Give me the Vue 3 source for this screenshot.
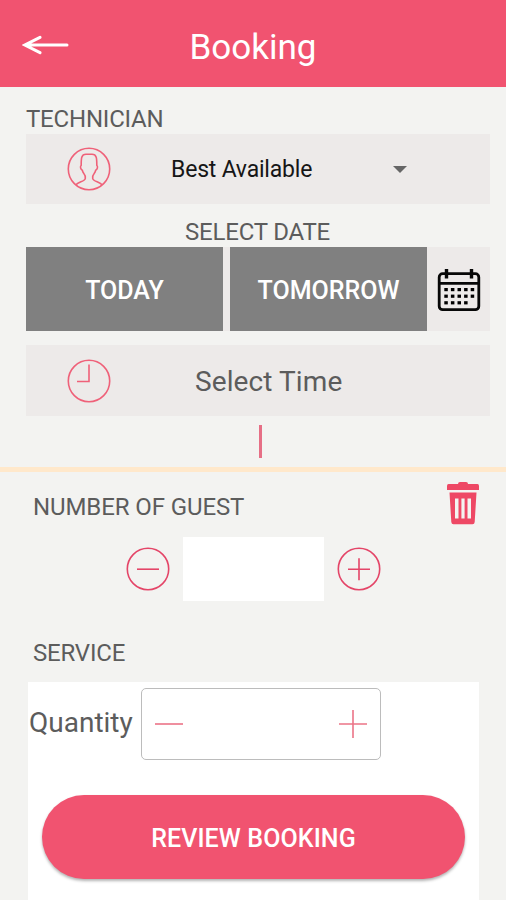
<template>
  <div class="booking">
    <header class="topbar">
      <button class="back-btn" aria-label="Back">
        <svg width="48" height="24" viewBox="0 0 48 24">
          <path d="M18 4.3 L3 12 L18 19.7 M4 12 H45" />
        </svg>
      </button>
      <h1 class="title">Booking</h1>
    </header>

    <section class="schedule">
      <div class="label technician-label"><span>TECHNICIAN</span></div>
      <div class="field">
        <svg class="field-icon" width="44" height="44" viewBox="0 0 44 44">
          <circle cx="22" cy="22" r="20.7" />
          <path
            d="M9 37.8 C11 34.8 18 34.5 18.3 31.5 C18.5 29.5 18 28 17 26.8 C16 25.5 15.6 24.5 15.3 23.3 C13.4 22.5 13 19.5 14.2 18.3 C14.2 12 14 7.3 19 7.3 H25 C30 7.3 29.8 12 29.8 18.3 C31 19.5 30.6 22.5 28.7 23.3 C28.4 24.5 28 25.5 27 26.8 C26 28 25.5 29.5 25.7 31.5 C26 34.5 33 34.8 35 37.8"
          />
        </svg>
        <span class="technician">Best Available</span>
        <span class="caret"></span>
      </div>

      <div class="label date-label"><span>SELECT DATE</span></div>
      <div class="dates">
        <button v-for="day in DAYS" :key="day" class="day-btn" @click="selectedDay = day">
          <span>{{ day }}</span>
        </button>
        <button class="calendar-btn" aria-label="Pick a date">
          <svg width="44" height="44" viewBox="0 0 44 44">
            <rect class="frame" x="2.2" y="5.7" width="39.6" height="36" rx="3.5" />
            <path class="frame" d="M2 15.3 H42" />
            <path class="ring" d="M9.5 1 V10.5 M34.5 1 V10.5" />
            <rect
              v-for="dot in calendarDots"
              :key="dot.id"
              :x="dot.x"
              :y="dot.y"
              width="3.5"
              height="3.2"
            />
          </svg>
        </button>
      </div>

      <div class="field time-field">
        <svg class="field-icon" width="44" height="44" viewBox="0 0 44 44">
          <circle cx="22" cy="22" r="20.7" />
          <path d="M22 5.5 V22.5 H10" />
        </svg>
        <span class="time">Select Time</span>
      </div>
      <div class="cursor"></div>
    </section>

    <section class="guests">
      <div class="guests-head">
        <span class="label guest-label">NUMBER OF GUEST</span>
        <button class="trash-btn" aria-label="Remove">
          <svg width="32" height="43" viewBox="0 0 32 43">
            <path
              fill-rule="evenodd"
              d="M11 2 Q11 0 13 0 H19 Q21 0 21 2 H30.5 Q32 2 32 4 V8 H0 V4 Q0 2 1.5 2 Z M2.5 10.5 H29.5 L27.7 40 Q27.5 42.3 25.5 42.3 H6.5 Q4.5 42.3 4.3 40 Z M8 16.5 V36.5 H11.5 V16.5 Z M14.4 16.5 V36.5 H17.6 V16.5 Z M20.5 16.5 V36.5 H24 V16.5 Z"
            />
          </svg>
        </button>
      </div>
      <div class="counter">
        <button class="round-btn" aria-label="Fewer guests" @click="changeGuests(-1)">
          <svg width="44" height="44" viewBox="0 0 44 44">
            <circle cx="22" cy="22" r="20.7" />
            <path d="M11 22.2 H33" />
          </svg>
        </button>
        <div class="guest-count">{{ guests || '' }}</div>
        <button class="round-btn" aria-label="More guests" @click="changeGuests(1)">
          <svg width="44" height="44" viewBox="0 0 44 44">
            <circle cx="22" cy="22" r="20.7" />
            <path d="M11 22.2 H33 M22 11.2 V33.2" />
          </svg>
        </button>
      </div>
    </section>

    <div class="label service-label"><span>SERVICE</span></div>
    <section class="service">
      <div class="quantity-row">
        <span class="quantity-label">Quantity</span>
        <div class="stepper">
          <button aria-label="Less" @click="changeQuantity(-1)">
            <svg width="30" height="30" viewBox="0 0 30 30"><path d="M1 15 H29" /></svg>
          </button>
          <span>{{ quantity || '' }}</span>
          <button aria-label="More" @click="changeQuantity(1)">
            <svg width="30" height="30" viewBox="0 0 30 30"><path d="M1 15 H29 M15 1 V29" /></svg>
          </button>
        </div>
      </div>
      <button class="review-btn"><span>REVIEW BOOKING</span></button>
    </section>
  </div>
</template>

<script setup>
import { ref } from 'vue'

const DAYS = ['TODAY', 'TOMORROW']

const selectedDay = ref(null)
const guests = ref(0)
const quantity = ref(0)

// 5 x 3 dots, the last one is left out
const calendarDots = Array.from({ length: 14 }, (_, i) => ({
  id: i,
  x: 7.3 + (i % 5) * 6.6,
  y: 20 + Math.floor(i / 5) * 6.6,
}))

function changeGuests(step) {
  guests.value = Math.max(0, guests.value + step)
}

function changeQuantity(step) {
  quantity.value = Math.max(0, quantity.value + step)
}
</script>

<style>
body {
  margin: 0;
  background: #f3f3f1;
}
</style>

<style scoped>
.booking {
  display: flex;
  flex-direction: column;
  width: 506px;
  height: 900px;
  overflow: hidden;
  background: #f3f3f1;
  color: #5c5c5c;
  font-family: Roboto, 'Liberation Sans', sans-serif;
}

button {
  padding: 0;
  border: none;
  background: none;
  font: inherit;
  cursor: pointer;
}

svg {
  display: block;
}

.topbar {
  display: grid;
  grid-template-columns: 72px 1fr 72px;
  align-items: center;
  height: 87px;
  flex: none;
  background: #f15370;
}

.back-btn {
  margin: 3px 0 0 22px;
}

.back-btn path {
  fill: none;
  stroke: #fff;
  stroke-width: 3;
  stroke-linecap: round;
}

.title {
  margin: 8px 0 0;
  color: #fff;
  font-size: 35px;
  font-weight: 400;
  line-height: 42px;
  text-align: center;
}

.label {
  font-size: 24px;
  line-height: 28px;
  letter-spacing: -0.2px;
}

.schedule {
  height: 380px;
  flex: none;
  padding: 0 16px 0 26px;
  border-bottom: 5px solid #ffe8cb;
}

.technician-label {
  padding: 18px 0 1px;
}

.field {
  display: flex;
  align-items: center;
  height: 70px;
  padding-left: 41px;
  background: #edeae9;
}

.field-icon {
  fill: none;
  stroke: #ef6179;
  stroke-width: 1.6;
}

.technician {
  width: 222px;
  margin-left: 60px;
  padding-top: 1px;
  color: #161616;
  font-size: 23px;
  letter-spacing: -0.2px;
}

.caret {
  border: 7px solid transparent;
  border-top-color: #666;
  border-bottom: none;
}

.date-label {
  padding: 14px 1px 1px 0;
  text-align: center;
}

.dates {
  display: flex;
  height: 84px;
  background: #edeae9;
}

.day-btn {
  width: 197px;
  padding-top: 2px;
  margin-right: 7px;
  background: #808080;
  color: #fff;
  font-size: 25px;
  font-weight: 500;
}

.day-btn:nth-child(2) {
  margin-right: 0;
}

.calendar-btn {
  display: flex;
  flex: 1;
  align-items: center;
  justify-content: center;
  padding-top: 1px;
}

.calendar-btn .frame,
.calendar-btn .ring {
  fill: none;
  stroke: #080808;
  stroke-width: 2.8;
}

.calendar-btn .ring {
  stroke-width: 3.4;
}

.time-field {
  margin-top: 14px;
  height: 71px;
}

.time {
  margin-left: 84px;
  padding-top: 2px;
  font-size: 28px;
  letter-spacing: 0.1px;
}

.cursor {
  width: 3px;
  height: 33px;
  margin: 9px 0 0 233px;
  background: #e66f86;
}

.guests-head {
  display: flex;
  justify-content: space-between;
  padding: 9px 27px 0 33px;
}

.guest-label {
  margin-top: 12px;
  letter-spacing: -0.1px;
}

.trash-btn {
  padding-top: 1px;
}

.trash-btn path {
  fill: #ee4865;
}

.counter {
  display: flex;
  align-items: center;
  padding: 12px 0 0 126px;
}

.round-btn svg {
  fill: none;
  stroke: #e44568;
  stroke-width: 1.6;
}

.guest-count {
  width: 141px;
  height: 64px;
  margin: 0 13px;
  background: #fff;
  font-size: 28px;
  line-height: 64px;
  text-align: center;
}

.service-label {
  padding: 38px 0 15px 33px;
}

.service {
  flex: 1;
  width: 451px;
  margin-left: 28px;
  background: #fff;
}

.quantity-row {
  display: flex;
  padding-top: 6px;
}

.quantity-label {
  box-sizing: border-box;
  width: 113px;
  padding: 18px 0 0 1px;
  font-size: 28px;
  line-height: 33px;
}

.stepper {
  display: flex;
  box-sizing: border-box;
  align-items: center;
  justify-content: space-between;
  width: 240px;
  height: 72px;
  padding: 0 12px;
  border: 1.5px solid #bcbcbc;
  border-radius: 5px;
  font-size: 28px;
}

.stepper path {
  fill: none;
  stroke: #ec7487;
  stroke-width: 1.6;
}

.review-btn {
  display: block;
  width: 423px;
  height: 84px;
  margin: 35px 0 0 14px;
  padding-top: 2px;
  border-radius: 42px;
  background: #f15370;
  box-shadow: 0 2px 3px rgba(0, 0, 0, 0.3);
  color: #fff;
  font-size: 25px;
  font-weight: 500;
  letter-spacing: 0.1px;
}
</style>
